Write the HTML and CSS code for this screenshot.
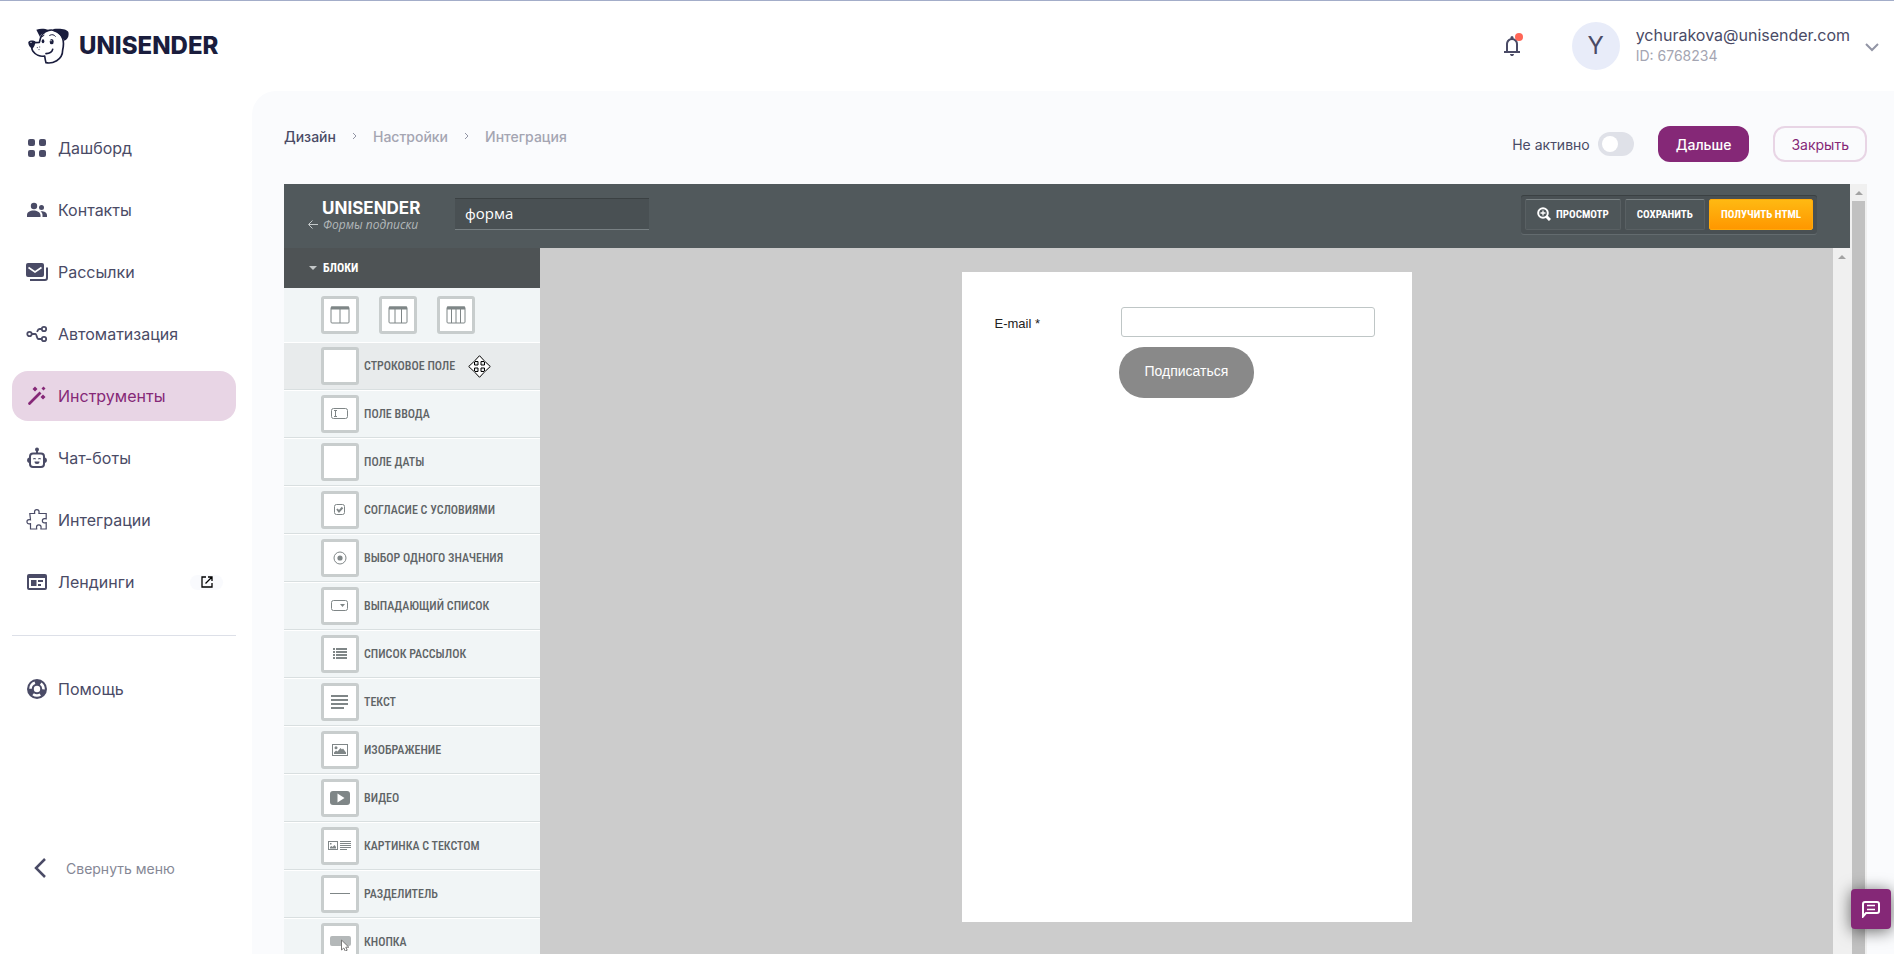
FILE: index.html
```html
<!DOCTYPE html>
<html lang="ru">
<head>
<meta charset="utf-8">
<title>Unisender</title>
<link rel="stylesheet" href="styles.css">
</head>
<body>
<div class="app">
  <header class="topbar">
    <a class="brand" href="#">
      <svg class="brand-dog" width="41" height="36" viewBox="0 0 123 108" fill="none" stroke="#1a1d3d" stroke-width="5" stroke-linejoin="round" stroke-linecap="round">
        <path fill="#1a1d3d" stroke="none" d="M25 5 C38 1 51 2 61 6 C53 12 40 14 36 27 Z"/>
        <path fill="#1a1d3d" stroke="none" d="M76 3 C96 0 117 3 121 12 C124 23 119 35 109 38 C103 29 91 14 76 10 Z"/>
        <path fill="#1a1d3d" stroke="none" d="M1 42 C6 36 17 37 22 40 C22 49 19 57 13 62 C7 60 0 51 1 42 Z"/>
        <path d="M20 44 L34 43 C37 26 45 10 62 7 C73 4 88 8 96 17 C106 29 109 45 104 66 C104 82 96 92 86 98 C76 104 62 106 54 104 C52 97 51 91 50 84 C36 87 22 80 15 70 C11 64 11 58 13 55"/>
        <path d="M54 77 C64 76 72 73 74 64"/>
        <path stroke-width="3" d="M42 26 L48 22 M65 22 C72 18 79 20 82 25"/>
        <ellipse cx="45" cy="40" rx="4" ry="6" fill="#1a1d3d" stroke="none"/>
        <ellipse cx="71" cy="41" rx="6" ry="8" fill="#1a1d3d" stroke="none"/>
        <circle cx="69" cy="38" r="2" fill="#fff" stroke="none"/>
        <circle cx="9" cy="43" r="2" fill="#fff" stroke="none"/>
        <path stroke-width="3" d="M28 59 v.1 M35 57 v.1 M33 65 v.1"/>
      </svg>
      <span class="brand-name">UNISENDER</span>
    </a>
    <div class="account">
      <button class="bell" type="button" aria-label="Уведомления">
        <svg width="24" height="24" viewBox="0 0 24 24" fill="#4a4b66"><path d="M4 19v-2h2v-7q0-2 1.250-3.700T10.500 4.200V3.500q0-.6.450-1.050T12 2t1.050.45T13.500 3.500v.7q2 .5 3.250 2.150T18 10v7h2v2ZM12 22q-.8 0-1.400-.6T10 20h4q0 .8-.6 1.400T12 22ZM8 17h8v-7q0-1.650-1.170-2.830T12 6 9.180 7.170 8 10Z"/></svg>
        <span class="bell-dot"></span>
      </button>
      <span class="avatar">Y</span>
      <div class="who">
        <span class="mail">ychurakova@unisender.com</span>
        <span class="uid">ID: 6768234</span>
      </div>
      <button class="chevron" type="button" aria-label="Меню аккаунта">
        <svg width="14" height="9" viewBox="0 0 14 9" fill="none" stroke="#9295a5" stroke-width="2"><path d="M1 1l6 6 6-6"/></svg>
      </button>
    </div>
  </header>

  <div class="body">
    <nav class="sidebar">
      <a class="nav" href="#"><svg viewBox="0 0 24 24"><rect x="3" y="3" width="7" height="7" rx="2"/><rect x="14" y="3" width="7" height="7" rx="2"/><rect x="3" y="14" width="7" height="7" rx="2"/><rect x="14" y="14" width="7" height="7" rx="2"/></svg>Дашборд</a>
      <a class="nav" href="#"><svg viewBox="0 0 24 24"><circle cx="9" cy="8" r="3.200"/><circle cx="16.500" cy="9.500" r="2.500"/><path d="M2 19v-2c0-3 3-4.500 6.500-4.500S15 14 15.500 17v2Z"/><path d="M15.500 13.300c3.500-.2 6.500 1.200 6.500 4V19h-4.500v-2c0-1.500-.8-2.800-2-3.700Z"/></svg>Контакты</a>
      <a class="nav" href="#"><svg viewBox="0 0 24 24"><rect x="1" y="3" width="18" height="14" rx="2"/><path d="M3.500 7.500l6.500 4.500 6.500-4.500" fill="none" stroke="#fff" stroke-width="1.600"/><path d="M22 7.500V18a2 2 0 0 1-2 2H5" fill="none" stroke="currentColor" stroke-width="2"/></svg>Рассылки</a>
      <a class="nav" href="#"><svg viewBox="0 0 24 24" fill="none" stroke="currentColor" stroke-width="1.800"><circle class="hollow" cx="4.500" cy="12" r="2.200"/><circle class="hollow" cx="19" cy="7" r="2.200"/><circle class="hollow" cx="19" cy="17" r="2.200"/><path class="hollow" d="M7 12h3.500c1.200 0 1.200 5 3 5H17M12 9.800C12.800 8 13.300 7 14.500 7H17"/></svg>Автоматизация</a>
      <a class="nav nav-active" href="#"><svg viewBox="0 0 24 24"><path d="M3.300 18.800 14.500 7.600l2 2L5.200 20.800q-.9.600-1.700-.2t-.2-1.800ZM10 2.500l2.500 2.500L10 7.500 7.500 5ZM18.500 2.500 20.500 4.500l-2 2-2-2ZM18 10.500l2.500 2.500-2.500 2.500-2.500-2.500Z"/></svg>Инструменты</a>
      <a class="nav" href="#"><svg viewBox="0 0 24 24"><rect x="5" y="7.500" width="14" height="13.500" rx="3" fill="none" stroke="currentColor" stroke-width="2"/><circle cx="12" cy="3.500" r="2"/><path d="M11 4h2v4h-2ZM4 11.500v5.500q-2-.4-2-2.700T4 11.500ZM20 11.500v5.500q2-.4 2-2.700t-2-2.800Z"/><path d="M8.300 13.200q1.200-1.400 2.400 0M13.300 13.200q1.200-1.400 2.400 0" fill="none" stroke="currentColor" stroke-width="1.200"/><path d="M9.500 15.500h5q0 2.500-2.500 2.500t-2.500-2.500Z"/></svg>Чат-боты</a>
      <a class="nav" href="#"><svg viewBox="0 0 24 24"><path d="M4.800 5.500h4.900c0-.7-.2-.8-.2-1.500a2.300 2.300 0 0 1 4.600 0c0 .7-.2.800-.2 1.500h7.300v5.300c-.7 0-1-.2-1.700-.2a2.100 2.100 0 0 0 0 4.300c.7 0 1-.2 1.700-.2V21h-5.300c0-.9.200-1.200.2-1.800a2.300 2.300 0 0 0-4.600 0c0 .6.200.9.200 1.800H5.500v-5.300c-.6 0-.7.200-1.400.2a2.100 2.100 0 0 1 0-4.300c.7 0 .8.200 1.400.2Z" fill="none" stroke="currentColor" stroke-width="1.200"/></svg>Интеграции</a>
      <a class="nav" href="#"><svg viewBox="0 0 24 24"><path fill-rule="evenodd" d="M4 4h16a2 2 0 0 1 2 2v12a2 2 0 0 1-2 2H4a2 2 0 0 1-2-2V6a2 2 0 0 1 2-2ZM4 8v10h16V8Z"/><path d="M6 10h5.500v6H6ZM13 10h5v2h-5ZM13 14h3v2h-3Z"/></svg>Лендинги
        <span class="ext"><svg viewBox="0 0 12 12" fill="none" stroke="#000" stroke-width="1.300"><path class="hollow" d="M5 1H1v10h10V7M7 1h4v4M11 1 4.500 7.500"/></svg></span></a>
      <hr class="rule">
      <a class="nav" href="#"><svg viewBox="0 0 24 24"><circle cx="12" cy="12" r="10"/><circle class="hollow" cx="12" cy="12" r="6.500" stroke="#fff" stroke-width="2.600" stroke-dasharray="7.600 6" stroke-dashoffset="-6.500"/><circle cx="12" cy="12" r="3.200" fill="#fff"/></svg>Помощь</a>
      <button class="collapse" type="button"><svg width="12" height="20" viewBox="0 0 12 20" fill="none" stroke="#4a4b66" stroke-width="2.500"><path d="M11 1 2 10l9 9"/></svg>Свернуть меню</button>
    </nav>

    <main class="main">
      <div class="toolbar">
        <nav class="crumbs">
          <a class="crumb crumb-now" href="#">Дизайн</a>
          <svg width="5" height="8" viewBox="0 0 5 8"><path d="M1 1l3 3-3 3"/></svg>
          <a class="crumb" href="#">Настройки</a>
          <svg width="5" height="8" viewBox="0 0 5 8"><path d="M1 1l3 3-3 3"/></svg>
          <a class="crumb" href="#">Интеграция</a>
        </nav>
        <div class="actions">
          <label class="switch">Не активно<input type="checkbox"></label>
          <button class="btn btn-main" type="button">Дальше</button>
          <button class="btn btn-ghost" type="button">Закрыть</button>
        </div>
      </div>

      <div class="frame">
        <section class="editor">
          <header class="ed-head">
            <a class="ed-brand" href="#">
              <span class="ed-logo">UNISENDER</span>
              <span class="ed-back"><svg width="10" height="9" viewBox="0 0 10 9" fill="none" stroke="#c5cacb"><path d="M10 4.500H1M4.500.5l-4 4 4 4"/></svg>Формы подписки</span>
            </a>
            <input class="ed-name" type="text" value="форма" aria-label="Название формы">
            <div class="ed-tools">
              <button class="tool" type="button"><svg width="14" height="14" viewBox="0 0 14 14" fill="none" stroke="#fff"><circle cx="6" cy="6" r="4.800" stroke-width="2"/><path stroke-width="3" d="M9.500 9.500l3.500 3.500"/><path stroke-width="1.300" d="M3.500 6h5M6 3.500v5"/></svg>ПРОСМОТР</button>
              <button class="tool" type="button">СОХРАНИТЬ</button>
              <button class="tool tool-hot" type="button">ПОЛУЧИТЬ HTML</button>
            </div>
          </header>
          <div class="ed-body">
            <aside class="blocks">
              <h2 class="blocks-title"><svg width="8" height="4" viewBox="0 0 8 4"><path fill="#c3c7c8" d="M0 0h8L4 4Z"/></svg>БЛОКИ</h2>
              <div class="cols">
                <button class="tile" type="button" aria-label="Две колонки"><svg width="20" height="18" viewBox="0 0 20 18"><path d="M1 2h18" stroke-width="3"/><rect x="1" y="1" width="18" height="16" rx="1"/><path d="M10 3v14"/></svg></button>
                <button class="tile" type="button" aria-label="Три колонки"><svg width="20" height="18" viewBox="0 0 20 18"><path d="M1 2h18" stroke-width="3"/><rect x="1" y="1" width="18" height="16" rx="1"/><path d="M7 3v14M13.500 3v14"/></svg></button>
                <button class="tile" type="button" aria-label="Четыре колонки"><svg width="20" height="18" viewBox="0 0 20 18"><path d="M1 2h18" stroke-width="3"/><rect x="1" y="1" width="18" height="16" rx="1"/><path d="M5.500 3v14M10 3v14M14.500 3v14"/></svg></button>
              </div>
              <ul class="list">
                <li class="block block-hover"><span class="tile"></span>СТРОКОВОЕ ПОЛЕ
                  <svg class="cursor" width="23" height="23" viewBox="0 0 23 23" fill="#fff" stroke="#000"><path d="M11.500.7 16 5.500v1h-3v3.500h3.500V7h1l4.800 4.500-4.800 4.500h-1v-3H13v3.500h3v1l-4.500 4.800L7 17.500v-1h3V13H6.500v3h-1L.7 11.500 5.500 7h1v3H10V6.500H7v-1Z"/></svg></li>
                <li class="block"><span class="tile"><svg width="18" height="12" viewBox="0 0 18 12"><rect x=".5" y=".5" width="16" height="10" rx="2" stroke-width="1"/><path stroke-width="1" d="M3 2.500h3M3 8.500h3M4.500 2.500v6"/></svg></span>ПОЛЕ ВВОДА</li>
                <li class="block"><span class="tile"></span>ПОЛЕ ДАТЫ</li>
                <li class="block"><span class="tile"><svg width="12" height="12" viewBox="0 0 12 12"><rect x=".5" y=".5" width="10" height="10" rx="2" stroke-width="1"/><path stroke-width="2" d="M3 5l2 2.500L8.500 3.500"/></svg></span>СОГЛАСИЕ С УСЛОВИЯМИ</li>
                <li class="block"><span class="tile"><svg width="14" height="14" viewBox="0 0 14 14"><circle cx="7" cy="7" r="6" stroke-width="1"/><circle cx="7" cy="7" r="2.600" fill="#7f8687" stroke="none"/></svg></span>ВЫБОР ОДНОГО ЗНАЧЕНИЯ</li>
                <li class="block"><span class="tile"><svg width="18" height="12" viewBox="0 0 18 12"><rect x=".5" y=".5" width="16" height="10" rx="2" stroke-width="1"/><path fill="#7f8687" stroke="none" d="M9 4h5l-2.500 3Z"/></svg></span>ВЫПАДАЮЩИЙ СПИСОК</li>
                <li class="block"><span class="tile"><svg width="16" height="12" viewBox="0 0 16 12"><path d="M1 1h2M1 4h2M1 7h2M1 10h2M4 1h11M4 4h11M4 7h11M4 10h11"/></svg></span>СПИСОК РАССЫЛОК</li>
                <li class="block"><span class="tile"><svg width="18" height="14" viewBox="0 0 18 14"><path d="M0 1h17M0 5h17M0 9h17M0 13h13"/></svg></span>ТЕКСТ</li>
                <li class="block"><span class="tile"><svg width="16" height="12" viewBox="0 0 16 12"><rect x=".5" y=".5" width="15" height="11" stroke-width="1"/><circle cx="4" cy="3.700" r="1.500" fill="#7f8687" stroke="none"/><path fill="#7f8687" stroke="none" d="M2 10V8.500l2-2 1.500 1 3-3.500 1.500 1.500 1-1 3 4V10Z"/></svg></span>ИЗОБРАЖЕНИЕ</li>
                <li class="block"><span class="tile"><svg width="20" height="14" viewBox="0 0 20 14"><rect width="20" height="14" rx="3" fill="#7f8687" stroke="none"/><path fill="#fff" stroke="none" d="M7.500 2.500 14.500 7l-7 4.500Z"/></svg></span>ВИДЕО</li>
                <li class="block"><span class="tile"><svg width="24" height="10" viewBox="0 0 24 10"><rect x=".5" y=".5" width="9" height="8" stroke-width="1"/><path fill="#7f8687" stroke="none" d="M2 2h1.500v1.500H2ZM2 7.500V6l1.500-1 1 1 2-2L8 6v1.500ZM12 0h11v1H12ZM12 2h11v1H12ZM12 4h11v1H12ZM12 6h11v1H12ZM12 8h7v1h-7Z"/></svg></span>КАРТИНКА С ТЕКСТОМ</li>
                <li class="block"><span class="tile"><svg width="20" height="2" viewBox="0 0 20 2"><path fill="#7f8687" stroke="none" d="M0 0h20v1H0Z"/></svg></span>РАЗДЕЛИТЕЛЬ</li>
                <li class="block"><span class="tile"><svg width="22" height="18" viewBox="0 0 22 18"><rect x="1" y="3" width="21" height="10" rx="2" fill="#b4b8b9" stroke="none"/><path fill="#fff" stroke="#777" stroke-width="1" d="M12.500 7v10l2.300-2 1.500 3.200 1.900-1-1.400-3h3Z"/></svg></span>КНОПКА</li>
              </ul>
            </aside>
            <div class="canvas">
              <form class="paper">
                <label class="f-label" for="email">E-mail *</label>
                <input class="f-input" id="email" type="text">
                <button class="f-submit" type="button">Подписаться</button>
              </form>
            </div>
            <div class="bar"><i class="bar-up"></i></div>
          </div>
        </section>
        <div class="bar bar-outer"><i class="bar-up"></i><i class="bar-thumb"></i></div>
      </div>
    </main>
  </div>
</div>
<button class="chat" type="button" aria-label="Чат">
  <svg width="18" height="17" viewBox="0 0 18 17" fill="none" stroke="#fff" stroke-width="2"><path d="M1 15.500V3q0-2 2-2h12q2 0 2 2v7q0 2-2 2H4Z"/><path stroke-width="1.500" d="M5 4.500h8M5 8.500h8"/></svg>
</button>
</body>
</html>
```

FILE: styles.css
```css
* { box-sizing: border-box; }
body { margin: 0; background: #fff; color: #4a4b66; font-family: Inter, sans-serif; }
a { color: inherit; text-decoration: none; }
button { font: inherit; color: inherit; border: 0; padding: 0; background: none; cursor: pointer; }

.app { height: 100vh; display: flex; flex-direction: column; overflow: hidden; border-top: 1px solid #a3adc9; }

.topbar { display: flex; justify-content: space-between; align-items: center; height: 90px; flex: none; padding: 0 15px 0 28px; }
.brand { display: flex; align-items: center; gap: 10px; color: #1a1d3d; }
.brand-name { font: 800 24px/32px Inter, sans-serif; }
.account { display: flex; align-items: center; }
.bell { position: relative; width: 24px; height: 24px; margin-right: 48px; }
.bell svg { display: block; }
.bell-dot { position: absolute; top: -1px; right: 1px; width: 8px; height: 8px; border-radius: 50%; background: #ff6657; }
.avatar { width: 48px; height: 48px; border-radius: 50%; background: #e8ecf9; font-size: 24px; line-height: 48px; text-align: center; }
.who { display: flex; flex-direction: column; margin: 0 15px 2px 16px; }
.mail { font-size: 16px; line-height: 22px; }
.uid { font-size: 14px; line-height: 20px; color: #a4a5b2; }
.chevron { width: 14px; height: 24px; }

.body { display: flex; flex: 1; min-height: 0; }
.sidebar { display: flex; flex-direction: column; flex: none; width: 252px; padding: 32px 16px 61px 12px; gap: 12px; }
.nav { display: flex; align-items: center; gap: 9px; height: 50px; padding: 0 13px; border-radius: 16px; font-size: 16px; line-height: 24px; }
.nav > svg { width: 24px; height: 24px; flex: none; fill: currentColor; }
.nav .hollow { fill: none; }
.nav-active { background: #e8d5e5; color: #852877; }
.ext { display: flex; align-items: center; justify-content: center; width: 33px; height: 15px; margin-left: auto; border-radius: 8px; background: #f9fafd; }
.ext svg { width: 12px; height: 12px; }
.rule { width: 100%; height: 1px; margin: 16px 0; border: 0; background: #dde0e8; }
.collapse { display: flex; align-items: center; gap: 20px; height: 50px; margin-top: auto; padding-left: 22px; font-size: 14px; color: #858795; }

.main { display: flex; flex-direction: column; flex: 1; min-width: 0; padding: 32px 27px 0 32px; border-radius: 24px 0 0 0; background: #fafbfd; }
.toolbar { display: flex; justify-content: space-between; height: 61px; flex: none; }
.crumbs { display: flex; align-items: center; gap: 16px; height: 26px; font-size: 14px; font-weight: 500; color: #a4a5b2; }
.crumbs svg { fill: none; stroke: #9295a5; stroke-width: 1; }
.crumb-now { color: #4a4b66; }
.actions { display: flex; align-items: center; gap: 24px; height: 42px; font-size: 14px; }
.switch { display: flex; align-items: center; gap: 8px; cursor: pointer; }
.switch input { appearance: none; display: flex; align-items: center; width: 36px; height: 24px; margin: 0; padding: 4px; border-radius: 12px; background: #dfe1e8; }
.switch input::before { content: ""; width: 16px; height: 16px; border-radius: 50%; background: #fff; }
.btn { height: 36px; border-radius: 12px; }
.btn-main { padding: 0 18px; background: #852877; color: #fff; font-weight: 500; }
.btn-ghost { padding: 0 16px; border: 2px solid #e8d5e5; color: #852877; }

.frame { display: flex; flex: 1; min-height: 0; }
.editor { display: flex; flex-direction: column; flex: 1; min-width: 0; font-family: "Roboto Condensed", "DejaVu Sans Condensed", sans-serif; }
.ed-head { display: flex; align-items: center; height: 64px; flex: none; padding: 0 33px 4px 24px; background: #51595c; }
.ed-brand { display: flex; flex-direction: column; width: 147px; padding-top: 3px; color: #fff; }
.ed-logo { padding-left: 14px; font: 700 17px/18px Inter, sans-serif; }
.ed-back { display: flex; align-items: center; gap: 5px; font: italic 12px/16px "Open Sans", sans-serif; color: #b2b8ba; }
.ed-name { width: 194px; height: 32px; padding: 0 10px 2px; border: solid; border-width: 1px 0; border-color: #3b4143 transparent #788083; background: #495053; color: #fff; font: 15px "Open Sans", sans-serif; }
.ed-tools { display: flex; gap: 4px; margin-left: auto; padding: 4px; border-radius: 3px; background: #495053; box-shadow: inset 0 1px #3b4143, 0 1px #636b6e; }
.tool { display: flex; align-items: center; gap: 5px; height: 31px; padding: 0 11px; border: 1px solid #596063; border-top-color: #7a8284; border-radius: 2px; background: #4e5659; color: #fff; font-size: 11px; font-weight: 700; }
.tool-hot { border-color: #ffa90a; background: linear-gradient(#ffb912, #ff9700); }

.ed-body { display: flex; flex: 1; min-height: 0; }
.blocks { width: 256px; flex: none; overflow: hidden; background: #f1f5f6; }
.blocks-title { display: flex; align-items: center; gap: 6px; height: 40px; margin: 0; padding-left: 25px; background: #4e5355; color: #fff; font-size: 12px; }
.cols { display: flex; gap: 20px; height: 54px; padding: 8px 37px; }
.tile { display: flex; align-items: center; justify-content: center; width: 38px; height: 38px; flex: none; border: 3px solid #c8cdcd; border-radius: 3px; background: #fff; }
.tile svg { fill: none; stroke: #7f8687; stroke-width: 2; }
.cols svg { stroke-width: 1; }
.list { margin: 0; padding: 0; list-style: none; }
.block { display: flex; align-items: center; gap: 5px; height: 48px; padding-left: 37px; border-top: 1px solid #fff; border-bottom: 1px solid #d9dfe0; color: #5f6466; font-size: 12px; font-weight: 500; }
.block-hover { background: #e8ebec; }
.cursor { margin-left: 8px; }

.canvas { flex: 1; min-width: 0; padding-top: 24px; background: #ccc; }
.paper { display: grid; grid-template-columns: 124px 254px; align-content: start; align-items: center; gap: 10px 2px; width: 450px; height: 650px; margin: 0 auto; padding: 35px 33px; background: #fff; font-family: "Liberation Sans", sans-serif; }
.f-label { padding-top: 2px; font-size: 13px; color: #222; }
.f-input { width: 254px; height: 30px; border: 1px solid #bfc6c6; border-radius: 3px; }
.f-submit { grid-column: 2; justify-self: start; height: 51px; margin-left: -2px; padding: 0 26px 3px; border-radius: 25px; background: #898989; color: #fff; font-size: 14px; }

.bar { display: flex; flex-direction: column; align-items: center; width: 17px; flex: none; background: #f0f0f0; }
.bar-up { margin: 7px 0 6px; border: solid transparent; border-width: 0 4px 4px; border-bottom-color: #a3a3a3; }
.bar-thumb { width: 13px; flex: 1; background: #c1c1c1; }
.chat { position: fixed; right: 3px; bottom: 25px; display: flex; align-items: center; justify-content: center; width: 40px; height: 40px; border-radius: 4px; background: #852877; box-shadow: 0 2px 16px rgba(0, 0, 0, .6); }
```
